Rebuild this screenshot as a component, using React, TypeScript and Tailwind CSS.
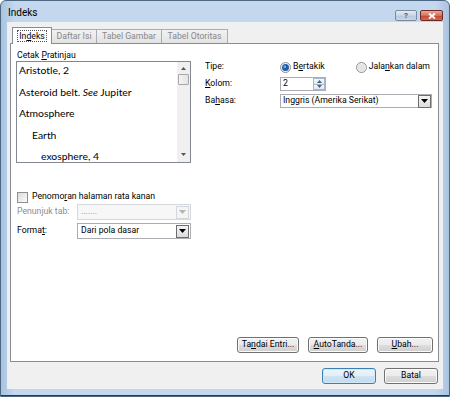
import React from 'react';

const ui = { fontFamily: 'Roboto, "Open Sans", sans-serif' };
const preview = { fontFamily: 'Lato, "Open Sans", sans-serif' };

// label with an underlined access key
const Key: React.FC<{ text: string; at: number }> = ({ text, at }) => (
  <span>
    {text.slice(0, at)}
    <span className="underline underline-offset-[1px]">{text[at]}</span>
    {text.slice(at + 1)}
  </span>
);

const Arrow: React.FC<{ disabled?: boolean }> = ({ disabled }) => (
  <div
    className={`flex h-[13px] w-[13px] items-center justify-center border ${
      disabled ? 'border-[#d5d8dc] bg-[#f4f4f4]' : 'border-[#6d6d6d] bg-[linear-gradient(#f4f4f4,#dcdcdc)]'
    }`}
  >
    <svg width="7" height="4" viewBox="0 0 7 4">
      <path d="M0 0h7L3.5 4z" fill={disabled ? '#b5b5b5' : '#000'} />
    </svg>
  </div>
);

const Button: React.FC<{ children: React.ReactNode; className: string; primary?: boolean }> = ({
  children,
  className,
  primary,
}) => (
  <div
    className={`flex h-[16px] items-center justify-center rounded-[3px] border text-black ${
      primary
        ? 'border-[#3c7fb1] bg-[linear-gradient(#edf5fb_0%,#e1eef8_50%,#cfe3f3_51%,#c2dbef_100%)] shadow-[inset_0_0_0_1px_#cfe9f9]'
        : 'border-[#707070] bg-[linear-gradient(#f2f2f2_0%,#ebebeb_50%,#dddddd_51%,#cfcfcf_100%)] shadow-[inset_0_0_0_1px_#fcfcfc]'
    } ${className}`}
  >
    {children}
  </div>
);

const Radio: React.FC<{ checked?: boolean }> = ({ checked }) => (
  <svg width="11" height="11" viewBox="0 0 11 11">
    <circle cx="5.5" cy="5.5" r="5" fill="#f2f2f2" stroke="#8f8f8f" />
    <circle cx="5.5" cy="5.5" r="3.5" fill={checked ? '#1d5fa8' : '#e4e4e4'} />
    {checked && <circle cx="4.8" cy="4.8" r="1.3" fill="#7fb3e6" />}
  </svg>
);

const entries = [
  { text: <>Aristotle, 2</>, pad: 'pl-[1px]' },
  {
    text: (
      <>
        Asteroid belt. <i>See</i> Jupiter
      </>
    ),
    pad: 'pl-[1px]',
  },
  { text: <>Atmosphere</>, pad: 'pl-[1px]' },
  { text: <>Earth</>, pad: 'pl-[14px]' },
  { text: <>exosphere, 4</>, pad: 'pl-[23px]' },
];

const App: React.FC = () => {
  return (
    <div
      style={ui}
      className="flex h-[397px] w-[450px] flex-col rounded-t-[6px] border border-[#4d6782] bg-[linear-gradient(90deg,#a9c3df,#c3d7ef_3%,#c3d7ef_97%,#a9c3df)] text-[8.7px] text-black"
    >
      {/* title bar */}
      <div className="flex h-[21px] items-center justify-between pl-[7px] pr-[6px] pt-[2px]">
        <span className="text-[10px]">Indeks</span>
        <div className="flex items-center gap-[3px] self-start pt-[7px]">
          <div className="flex h-[11px] w-[22px] items-center justify-center rounded-[2px] border border-[#788ba1] bg-[linear-gradient(#e4ecf6,#c7d5e5_50%,#b6c7db_51%,#c9d7e7)] text-[8px] font-bold text-[#4c5f76]">
            ?
          </div>
          <div className="flex h-[11px] w-[23px] items-center justify-center rounded-[2px] border border-[#6b2a22] bg-[linear-gradient(#e9a99b,#d6705c_50%,#c4442f_51%,#d36a4f)]">
            <svg width="8" height="6" viewBox="0 0 8 6">
              <path d="M1 0.5l6 5M7 0.5l-6 5" stroke="#fff" strokeWidth="1.8" />
            </svg>
          </div>
        </div>
      </div>

      {/* client area */}
      <div className="mx-[6px] flex h-[367px] flex-col bg-[#f0f0f0]">
        {/* tabs */}
        <div className="ml-[5px] mt-[5px] flex h-[16px] items-end">
          <div className="relative z-10 -mb-px flex h-[17px] w-[40px] items-center justify-center border border-b-0 border-[#898c95] bg-white">
            <span className="border border-dotted border-[#555] px-[1px] leading-[10px]">
              <Key text="Indeks" at={2} />
            </span>
          </div>
          <div className="flex h-[14px] w-[45px] items-center justify-center border border-l-0 border-b-0 border-[#a9acb3] bg-[linear-gradient(#f2f2f2,#e3e3e3)] text-[#888]">
            Daftar Isi
          </div>
          <div className="flex h-[14px] w-[65px] items-center justify-center border border-l-0 border-b-0 border-[#a9acb3] bg-[linear-gradient(#f2f2f2,#e3e3e3)] text-[#888]">
            Tabel Gambar
          </div>
          <div className="flex h-[14px] w-[66px] items-center justify-center border border-l-0 border-b-0 border-[#a9acb3] bg-[linear-gradient(#f2f2f2,#e3e3e3)] text-[#888]">
            Tabel Otoritas
          </div>
        </div>

        {/* tab panel */}
        <div className="ml-[3px] flex h-[319px] w-[429px] flex-col border border-[#898c95] bg-white pl-[5px] pr-[5px]">
          <div className="flex">
            {/* preview */}
            <div className="flex w-[175px] flex-col">
              <div className="mt-[6px] h-[11px] pl-[1px] leading-[11px]">
                Cetak <Key text="Pratinjau" at={0} />
              </div>
              <div className="flex h-[102px] border border-[#828790]">
                <div style={preview} className="flex-1 overflow-hidden pl-[1px] text-[10.4px]">
                  {entries.map((e, i) => (
                    <div key={i} className={`h-[21.5px] leading-[17px] ${e.pad}`}>
                      {e.text}
                    </div>
                  ))}
                </div>
                <div className="flex w-[13px] flex-col items-center bg-[#f0f0f0] pt-[5px]">
                  <svg width="5" height="3" viewBox="0 0 5 3">
                    <path d="M2.5 0L5 3H0z" fill="#555" />
                  </svg>
                  <div className="mt-[4px] h-[11px] w-[11px] rounded-[1px] border border-[#a7a7a7] bg-[linear-gradient(90deg,#f4f4f4,#e4e4e4)]" />
                  <div className="flex-1" />
                  <svg className="mb-[6px]" width="5" height="3" viewBox="0 0 5 3">
                    <path d="M0 0h5L2.5 3z" fill="#555" />
                  </svg>
                </div>
              </div>
            </div>

            {/* options */}
            <div className="ml-[14px] mt-[17px] flex flex-1 flex-col">
              <div className="flex h-[12px] items-center pr-[3px]">
                <span className="w-[75px]">Tipe:</span>
                <Radio checked />
                <span className="ml-[2px]">
                  <Key text="Bertakik" at={1} />
                </span>
                <span className="ml-auto flex items-center gap-[2px]">
                  <Radio />
                  <Key text="Jalankan dalam" at={4} />
                </span>
              </div>
              <div className="mt-[4px] flex h-[14px] items-center">
                <span className="w-[75px]">
                  <Key text="Kolom:" at={0} />
                </span>
                <div className="flex h-[14px] w-[46px] items-center border border-[#abadb3] bg-white">
                  <span className="flex-1 pl-[2px]">2</span>
                  <div className="flex h-[12px] w-[12px] flex-col border border-[#a9b9cc]">
                    <div className="flex flex-1 items-center justify-center border-b border-[#a9b9cc] bg-[linear-gradient(#f5f8fb,#dfe8f1)]">
                      <svg width="5" height="3" viewBox="0 0 5 3">
                        <path d="M2.5 0L5 3H0z" fill="#4a6282" />
                      </svg>
                    </div>
                    <div className="flex flex-1 items-center justify-center bg-[linear-gradient(#f5f8fb,#dfe8f1)]">
                      <svg width="5" height="3" viewBox="0 0 5 3">
                        <path d="M0 0h5L2.5 3z" fill="#4a6282" />
                      </svg>
                    </div>
                  </div>
                </div>
              </div>
              <div className="mt-[3px] flex h-[14px] items-center">
                <span className="w-[75px]">
                  <Key text="Bahasa:" at={2} />
                </span>
                <div className="flex h-[14px] w-[152px] items-center border border-[#abadb3] bg-white">
                  <span className="flex-1 pl-[2px]">Inggris (Amerika Serikat)</span>
                  <Arrow />
                </div>
              </div>
            </div>
          </div>

          {/* lower left */}
          <div className="mt-[28px] flex h-[12px] items-center gap-[4px] pl-[1px]">
            <div className="h-[11px] w-[11px] border border-[#8e8f8f] bg-[linear-gradient(135deg,#dcdcdc,#fbfbfb)]" />
            <Key text="Penomoran halaman rata kanan" at={6} />
          </div>
          <div className="mt-[1px] flex h-[16px] items-center">
            <span className="w-[61px] pl-[1px] text-[#8d8d8d]">Penunjuk tab:</span>
            <div className="flex h-[16px] w-[114px] items-center border border-[#d5d8dc] bg-[#f7f7f7] pr-[1px] text-[#8d8d8d]">
              <span className="flex-1 pl-[3px]">.......</span>
              <Arrow disabled />
            </div>
          </div>
          <div className="mt-[3px] flex h-[16px] items-center">
            <span className="w-[61px] pl-[1px]">
              <Key text="Format:" at={5} />
            </span>
            <div className="flex h-[16px] w-[114px] items-center border border-[#abadb3] bg-white pr-[1px]">
              <span className="flex-1 pl-[3px]">Dari pola dasar</span>
              <Arrow />
            </div>
          </div>

          <div className="flex-1" />
          <div className="mb-[8px] flex justify-end gap-[9px]">
            <Button className="w-[62px]">
              <Key text="Tandai Entri..." at={2} />
            </Button>
            <Button className="w-[60px]">
              <Key text="AutoTanda..." at={0} />
            </Button>
            <Button className="w-[56px]">
              <Key text="Ubah..." at={0} />
            </Button>
          </div>
        </div>

        {/* dialog buttons */}
        <div className="mt-[6px] flex justify-end gap-[8px] pr-[5px]">
          <Button primary className="w-[54px]">
            OK
          </Button>
          <Button className="w-[54px]">Batal</Button>
        </div>
      </div>
      <div className="flex-1 border-b border-[#1f3d4d]" />
    </div>
  );
};

export default App;
